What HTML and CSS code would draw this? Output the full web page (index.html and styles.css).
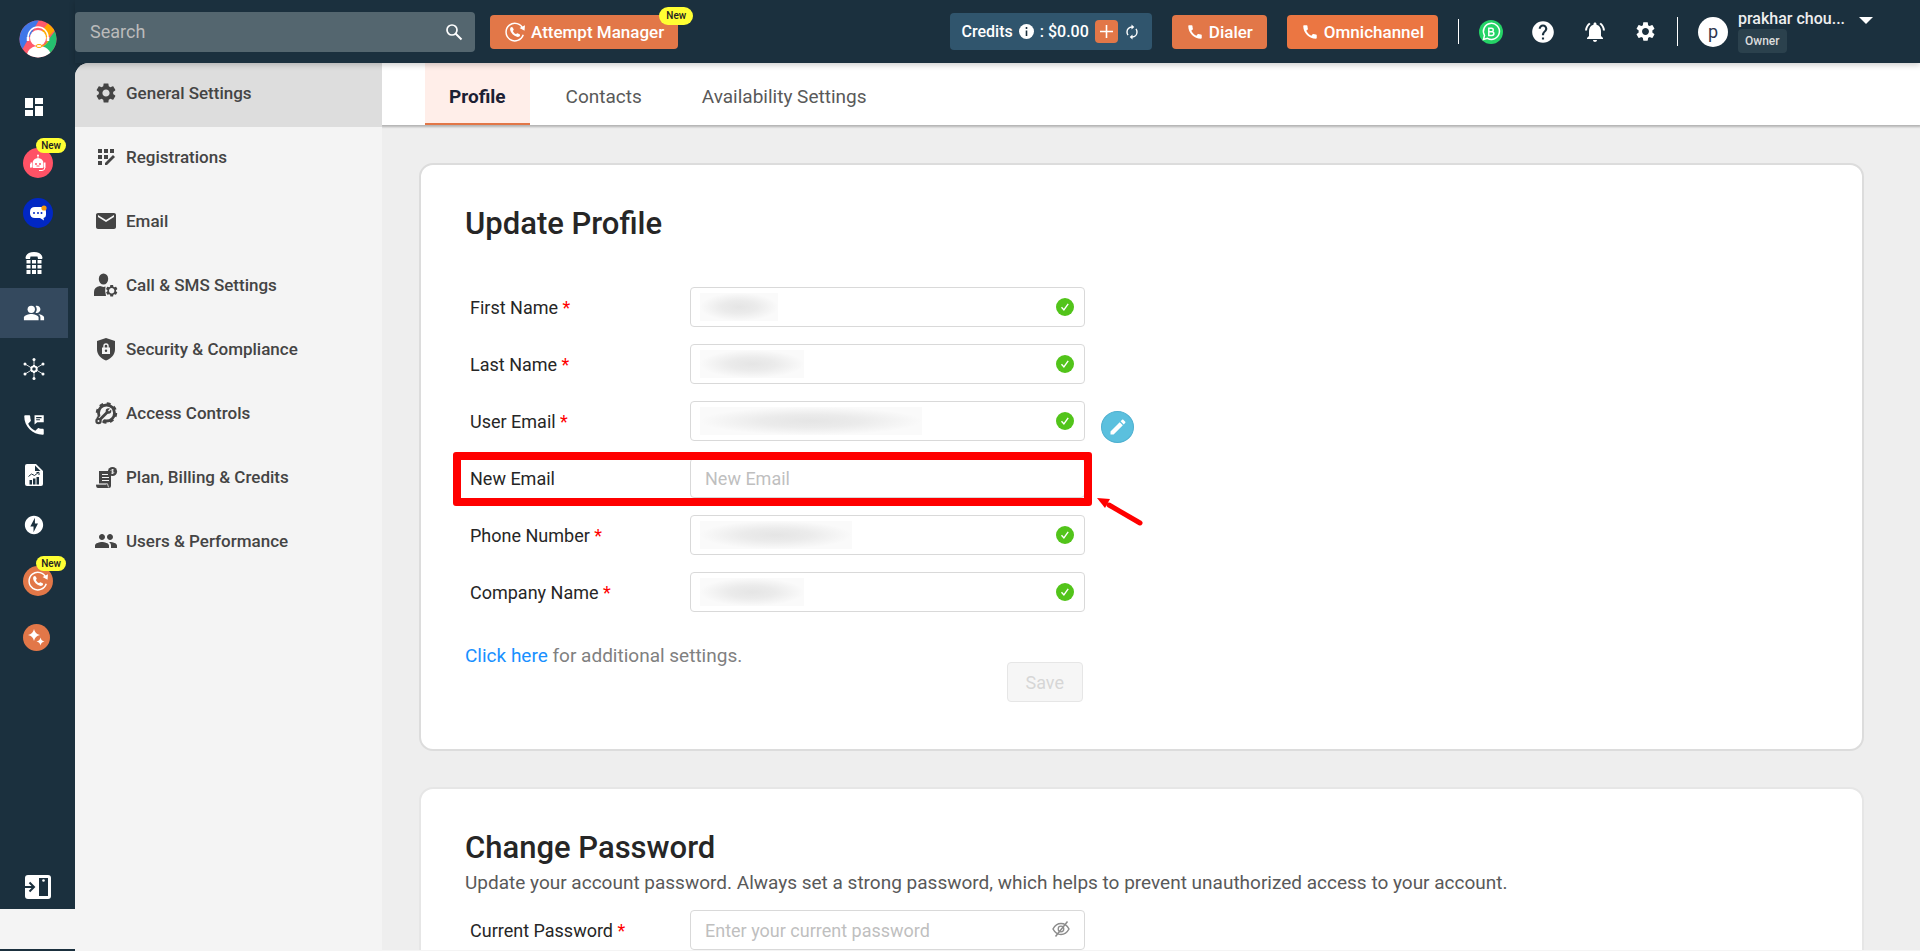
FILE: index.html
```html
<!DOCTYPE html>
<html lang="en">
<head>
  <meta charset="UTF-8" />
  <meta name="viewport" content="width=device-width, initial-scale=1.0"/>
  <title>General Settings | Profile</title>
  <link rel="stylesheet" href="styles.css">
</head>
<body>
  <!-- shared icons -->
  <svg class="sprite" aria-hidden="true">
    <symbol id="gear" viewBox="0 0 24 24"><path d="M19.14 12.94c.04-.3.06-.61.06-.94 0-.32-.02-.64-.07-.94l2.03-1.58c.18-.14.23-.41.12-.61l-1.92-3.32c-.12-.22-.37-.29-.59-.22l-2.39.96c-.5-.38-1.03-.7-1.62-.94l-.36-2.54c-.04-.24-.24-.41-.48-.41h-3.84c-.24 0-.43.17-.47.41l-.36 2.54c-.59.24-1.13.57-1.62.94l-2.39-.96c-.22-.08-.47 0-.59.22L2.74 8.87c-.12.21-.08.47.12.61l2.03 1.58c-.05.3-.09.63-.09.94s.02.64.07.94l-2.03 1.58c-.18.14-.23.41-.12.61l1.92 3.32c.12.22.37.29.59.22l2.39-.96c.5.38 1.03.7 1.62.94l.36 2.54c.05.24.24.41.48.41h3.84c.24 0 .44-.17.47-.41l.36-2.54c.59-.24 1.13-.56 1.62-.94l2.39.96c.22.08.47 0 .59-.22l1.92-3.32c.12-.22.07-.47-.12-.61l-2.01-1.58zM12 15.6c-1.98 0-3.6-1.62-3.6-3.6s1.62-3.6 3.6-3.6 3.6 1.62 3.6 3.6-1.62 3.6-3.6 3.6z"/></symbol>
    <symbol id="phone" viewBox="0 0 24 24"><path d="M20.01 15.38c-1.23 0-2.42-.2-3.53-.56-.35-.12-.74-.03-1.01.24l-1.57 1.97c-2.83-1.35-5.48-3.9-6.89-6.83l1.95-1.66c.27-.28.35-.67.24-1.02-.37-1.11-.56-2.3-.56-3.53 0-.54-.45-.99-.99-.99H4.19C3.65 3 3 3.24 3 3.99 3 13.28 10.73 21 20.01 21c.71 0 .99-.63.99-1.18v-3.45c0-.54-.45-.99-.99-.99z"/></symbol>
    <symbol id="check" viewBox="0 0 18 18"><circle cx="9" cy="9" r="9" fill="#52c41a"/><path d="M5.5 9.3l2.4 2.6 4.3-6" fill="none" stroke="#fff" stroke-width="1.4"/></symbol>
    <symbol id="redial" viewBox="0 0 24 24"><path d="M20.8 8.6A9.6 9.6 0 1 0 21 15" fill="none" stroke="#fff" stroke-width="1.6"/><path d="M17 7.6l5.4 2.9.5-6z"/><path d="M7.2 7.2c.9-.9 1.7-1 2.3-.1l1 1.8c.3.7-.2 1.2-.8 1.9.7 1.6 1.9 2.8 3.5 3.5.8-.7 1.3-1.2 2-.8l1.8 1c.9.7.7 1.5-.2 2.3-1.300.9-3.200.600-5.200-.6-1.700-1.100-3-2.500-4-4.200-1-1.800-1.300-3.600-.4-4.800z"/></symbol>
  </svg>

  <div class="app">
    <nav class="rail" aria-label="Main">
      <a href="#" class="logo" aria-label="Home">
        <svg width="38" height="38" viewBox="0 0 38 38">
          <defs><clipPath id="round"><circle cx="19" cy="19" r="18.500"/></clipPath></defs>
          <g clip-path="url(#round)">
            <path fill="#ff5a6b" d="M0 0h38v38H0z"/>
            <path fill="#3f77e8" d="M0 0h20L3 30 0 32z"/>
            <path fill="#ffa800" d="M29 3l7 7-18 18-2-8z"/>
            <path fill="#25c16f" d="M36 11l2 0v22l-10 2-4-8z"/>
            <path fill="#fff" d="M8 36c0-7 6-10 12-10s12 4 12 10v4H8z"/>
            <circle cx="19" cy="18" r="8" fill="#fff"/>
            <path d="M9 20v-3a10 10 0 0 1 20 0v3" fill="none" stroke="#fff" stroke-width="1.500"/>
            <path d="M9 17v4M29 17v4" stroke="#fff" stroke-width="2.500"/>
            <path d="M29 21q-2 5-8 5" fill="none" stroke="#ffa800" stroke-width="1"/>
            <ellipse cx="20" cy="26" rx="3" ry="1.500" fill="#fff" stroke="#ffa800"/>
          </g>
        </svg>
      </a>
      <a href="#" class="rail-item" aria-label="Dashboard">
        <svg width="24" height="24" viewBox="0 0 24 24"><path d="M3 13h8V3H3v10zm0 8h8v-6H3v6zm10 0h8V11h-8v10zm0-18v6h8V3h-8z"/></svg>
      </a>
      <a href="#" class="rail-item spaced" aria-label="Voice bot">
        <span class="bubble pink">
          <svg width="18" height="18" viewBox="0 0 18 18"><path d="M8.600 1h.8v3h-.8z"/><circle cx="9" cy="1.500" r="1"/><path d="M3.500 13V9.500a5.500 5.500 0 0 1 11 0V13q0 1-1 1h-9q-1 0-1-1z"/><path d="M1.500 8.500h1.500v5H1.500zM15 8.500h1.500v5H15z"/><path d="M1.500 13.500V10M16 13q0 3.500-3 3.500h-3" fill="none" stroke="#fff"/><circle cx="7" cy="10" r="1" fill="#ff5266"/><circle cx="11" cy="10" r="1" fill="#ff5266"/><path d="M7.500 12h3" stroke="#ff5266"/></svg>
        </span>
        <span class="new-tag">New</span>
      </a>
      <a href="#" class="rail-item" aria-label="Chat">
        <span class="bubble blue">
          <svg width="18" height="18" viewBox="0 0 18 18"><path d="M6 3h6q5 0 5 5v3q0 2.500-2.500 3l.5 2.500-4-2.500H6q-5 0-5-5V8q0-5 5-5z"/><g fill="#0127c4"><circle cx="5" cy="9" r="1"/><circle cx="9" cy="9" r="1"/><circle cx="12.500" cy="9" r="1"/></g><circle cx="15" cy="4" r="2.600" fill="#f99b0b"/></svg>
        </span>
      </a>
      <a href="#" class="rail-item" aria-label="Dial pad">
        <svg width="18" height="24" viewBox="0 0 18 24"><path d="M.5 7C1 3 4 1 9 1s8 2 8.500 6l-.5 1h-4l-.5-2.500h-7L5 8H1z"/><path d="M1.500 9h4v3.500h-4zM7 9h4v3.500H7zM12.500 9h4v3.500h-4zM1.500 14h4v3.500h-4zM7 14h4v3.500H7zM12.500 14h4v3.500h-4zM1.500 19h4v4h-4zM7 19h4v4H7zM12.500 19h4v4h-4z"/></svg>
      </a>
      <a href="#" class="rail-item active" aria-label="Users">
        <svg width="22" height="22" viewBox="0 0 24 24"><path d="M16.670 13.130C18.040 14.060 19 15.320 19 17v3h4v-3c0-2.180-3.570-3.470-6.330-3.870z"/><circle cx="9" cy="8" r="4"/><path d="M15 12c2.210 0 4-1.790 4-4s-1.790-4-4-4c-.47 0-.91.1-1.330.24C14.500 5.270 15 6.580 15 8s-.5 2.730-1.330 3.760c.42.140.860.240 1.330.240z"/><path d="M9 13c-2.670 0-8 1.340-8 4v3h16v-3c0-2.660-5.330-4-8-4z"/></svg>
      </a>
      <a href="#" class="rail-item spaced" aria-label="Integrations">
        <svg width="22" height="22" viewBox="0 0 22 22"><path d="M11 1v6M11 15v6M2 6l5 3M20 6l-5 3M2 16l5-3M20 16l-5-3" stroke="#fff" stroke-width=".8"/><circle cx="11" cy="11" r="2.700" fill="none" stroke="#fff" stroke-width="1.800"/><path d="M11 7v8M7.500 9l7 4M14.500 9l-7 4" stroke="#fff" stroke-width="2" stroke-dasharray="1.200 5.600"/><circle cx="11" cy="1.500" r="1.500"/><circle cx="11" cy="20.500" r="1.500"/><circle cx="2" cy="6" r="1.500"/><circle cx="20" cy="6" r="1.500"/><circle cx="2" cy="16" r="1.500"/><circle cx="20" cy="16" r="1.500"/></svg>
      </a>
      <a href="#" class="rail-item spaced" aria-label="Call logs">
        <svg width="26" height="26" viewBox="0 0 24 24"><path d="M20 15.500c-1.250 0-2.450-.2-3.570-.57-.35-.11-.74-.03-1.020.24l-2.200 2.200c-2.830-1.440-5.150-3.750-6.590-6.590l2.200-2.210c.28-.26.36-.65.25-1C8.700 6.450 8.500 5.250 8.500 4c0-.55-.45-1-1-1H4c-.55 0-1 .45-1 1 0 9.390 7.610 17 17 17 .55 0 1-.45 1-1v-3.500c0-.55-.45-1-1-1z"/><path d="M12.500 3v8.500L15 9.500h6V3z"/><path d="M14 5.200h5M14 7.200h3.500" stroke="#1b303e"/></svg>
      </a>
      <a href="#" class="rail-item" aria-label="Reports">
        <svg width="18" height="22" viewBox="0 0 18 22"><path d="M2 0h9l7 7v13q0 2-2 2H2q-2 0-2-2V2q0-2 2-2z"/><g fill="#1b303e"><path d="M10 1.500V7h5.500z"/><path d="M4.500 16H7v4.500H4.500zM8 14.500h2.500v6H8zM11.500 13H14v7.500h-2.500z"/></g><path d="M3.500 12.500l3-2.500 3 1.500 4.500-3.500M11.500 8.500H14V11" fill="none" stroke="#1b303e"/></svg>
      </a>
      <a href="#" class="rail-item" aria-label="Automation">
        <svg width="22" height="22" viewBox="0 0 24 24"><path d="M12 2.020c-5.510 0-9.980 4.470-9.980 9.980s4.470 9.980 9.980 9.980 9.980-4.470 9.980-9.980S17.510 2.020 12 2.020zM11.480 20v-6.260H8L13 4v6.260h3.350L11.480 20z"/></svg>
      </a>
      <a href="#" class="rail-item spaced" aria-label="Attempt Manager">
        <span class="bubble orange"><svg width="22" height="22"><use href="#redial"/></svg></span>
        <span class="new-tag">New</span>
      </a>
      <a href="#" class="rail-item spaced" aria-label="AI tools">
        <span class="bubble orange small">
          <svg width="17" height="17" viewBox="0 0 17 17"><path d="M6 0q1 5 6 6-5 1-6 6-1-5-6-6 5-1 6-6z"/><path d="M12.500 8.500q.7 3.300 4 4-3.300.7-4 4-.7-3.300-4-4 3.300-.7 4-4z"/></svg>
        </span>
      </a>
      <button type="button" class="rail-toggle" aria-label="Expand menu">
        <svg width="26" height="24" viewBox="0 0 26 24"><rect width="26" height="24" rx="3"/><path d="M14 3h9v18h-9z" fill="#1b303e"/><circle cx="18.500" cy="5.500" r="1.300"/><path d="M0 12h8M4.500 7.500L9 12l-4.500 4.500" fill="none" stroke="#1b303e" stroke-width="2"/></svg>
      </button>
      <div class="rail-foot"></div>
    </nav>

    <div class="page">
      <header class="topbar">
        <form class="search">
          <input type="search" placeholder="Search" aria-label="Search">
          <button type="button" aria-label="Search"><svg width="18" height="18" viewBox="0 0 18 18"><circle cx="7" cy="7" r="5" fill="none" stroke="#fff" stroke-width="1.700"/><path d="M10.500 10.500l6 6" stroke="#fff" stroke-width="2"/></svg></button>
        </form>
        <button type="button" class="btn attempt"><svg width="22" height="22"><use href="#redial"/></svg>Attempt Manager<span class="new-tag big">New</span></button>

        <div class="credits">
          <span>Credits</span>
          <svg width="15" height="15" viewBox="0 0 15 15"><circle cx="7.500" cy="7.500" r="7.500"/><path d="M7.500 6.500V12M7.500 3v2" stroke="#1b303e" stroke-width="1.600"/></svg>
          <span>: $0.00</span>
          <button type="button" class="add" aria-label="Add credits"><svg width="23" height="23" viewBox="0 0 23 23"><path d="M5 11.500h13M11.500 5v13" stroke="#fff" stroke-width="1.600"/></svg></button>
          <button type="button" class="plain" aria-label="Refresh"><svg width="16" height="16" viewBox="0 0 16 16"><path d="M8 3C5 3 3 5.300 3 8c0 1.200.4 2.300 1 3.200M8 13c3 0 5-2.300 5-5 0-1.200-.4-2.300-1-3.200" fill="none" stroke="#fff" stroke-width="1.400"/><path d="M7.500.5v5L10.300 3zM8.500 15.500v-5L5.700 13z"/></svg></button>
        </div>
        <button type="button" class="btn"><svg width="18" height="18"><use href="#phone"/></svg>Dialer</button>
        <button type="button" class="btn bright"><svg width="18" height="18"><use href="#phone"/></svg>Omnichannel</button>

        <div class="tools">
          <a href="#" aria-label="WhatsApp Business"><svg width="24" height="24" viewBox="0 0 24 24"><circle cx="12" cy="12" r="12" fill="#25d366"/><path d="M4.500 19.500l1-4.200a8 8 0 1 1 3 3z" fill="none" stroke="#fff" stroke-width="1.500"/><path d="M9.800 8.300h2.800a1.600 1.600 0 0 1 0 3.400H9.800zm0 3.400h3.200a1.800 1.800 0 0 1 0 3.700H9.800z" fill="none" stroke="#fff" stroke-width="1.500"/></svg></a>
          <a href="#" aria-label="Help"><svg width="26" height="26" viewBox="0 0 24 24"><path d="M12 2C6.480 2 2 6.480 2 12s4.480 10 10 10 10-4.480 10-10S17.520 2 12 2zm1 17h-2v-2h2v2zm2.070-7.750l-.9.920C13.450 12.900 13 13.500 13 15h-2v-.5c0-1.100.45-2.100 1.170-2.830l1.240-1.260c.37-.36.59-.86.59-1.410 0-1.100-.9-2-2-2s-2 .9-2 2H8c0-2.210 1.790-4 4-4s4 1.790 4 4c0 .88-.36 1.680-.93 2.250z"/></svg></a>
          <a href="#" aria-label="Notifications"><svg width="24" height="24" viewBox="0 0 24 24"><path d="M7.580 4.080L6.150 2.650C3.750 4.480 2.170 7.300 2.030 10.500h2c.15-2.650 1.510-4.970 3.550-6.420zm12.390 6.420h2c-.15-3.200-1.730-6.020-4.120-7.850l-1.420 1.430c2.020 1.450 3.390 3.770 3.540 6.420zM18 11c0-3.070-1.640-5.640-4.500-6.320V4c0-.83-.67-1.500-1.500-1.500s-1.500.67-1.500 1.500v.68C7.630 5.360 6 7.920 6 11v5l-2 2v1h16v-1l-2-2v-5zm-6 11c1.100 0 2-.9 2-2h-4c0 1.100.9 2 2 2z"/></svg></a>
          <a href="#" aria-label="Settings"><svg width="23" height="23"><use href="#gear"/></svg></a>
        </div>
        <div class="account">
          <span class="avatar">p</span>
          <div class="who">
            <span class="name">prakhar chou...</span>
            <span class="role">Owner</span>
          </div>
          <button type="button" class="plain caret" aria-label="Account menu"><svg width="14" height="7" viewBox="0 0 14 7"><path d="M0 0h14L7 7z"/></svg></button>
        </div>
      </header>

      <div class="body">
        <aside class="menu">
          <a href="#" class="active"><svg width="24" height="24"><use href="#gear"/></svg>General Settings</a>
          <a href="#"><svg width="24" height="24" viewBox="0 0 24 24"><path d="M4 4h4v4H4zM10 4h4v4h-4zM16 4h4v4h-4zM4 10h4v4H4zM10 10h4v4h-4zM4 16h4v4H4z"/><path d="M11 20v-2l8-8 2 2-8 8z"/></svg>Registrations</a>
          <a href="#"><svg width="24" height="24" viewBox="0 0 24 24"><path d="M20 4H4c-1.100 0-1.990.9-1.990 2L2 18c0 1.100.9 2 2 2h16c1.100 0 2-.9 2-2V6c0-1.100-.9-2-2-2zm0 4l-8 5-8-5V6l8 5 8-5v2z"/></svg>Email</a>
          <a href="#"><svg width="24" height="24" viewBox="0 0 24 24"><ellipse cx="9.500" cy="6" rx="4.700" ry="5.500"/><path d="M0 23v-4q0-5 6-6l3.500 1 2-.5q-1 5 .5 9.500z"/><g transform="translate(10.500 10.500) scale(.6)"><path d="M19.140 12.940c.04-.3.060-.61.060-.94 0-.32-.02-.64-.07-.94l2.030-1.580c.18-.14.230-.41.120-.61l-1.920-3.320c-.12-.22-.37-.29-.59-.22l-2.390.96c-.5-.38-1.030-.7-1.620-.94l-.36-2.540c-.04-.24-.24-.41-.48-.41h-3.840c-.24 0-.43.170-.47.410l-.36 2.540c-.59.240-1.130.570-1.620.940l-2.390-.96c-.22-.08-.47 0-.59.220L2.740 8.870c-.12.210-.08.470.120.610l2.030 1.580c-.05.3-.09.630-.09.940s.02.640.070.940l-2.030 1.580c-.18.140-.23.410-.12.610l1.920 3.320c.12.220.370.290.590.220l2.390-.96c.5.380 1.030.7 1.620.940l.36 2.540c.05.240.240.410.480.410h3.840c.24 0 .44-.17.470-.41l.36-2.540c.59-.24 1.130-.56 1.620-.94l2.390.96c.22.080.470 0 .59-.22l1.920-3.320c.12-.22.070-.47-.12-.61l-2.010-1.580zM12 16.500c-2.500 0-4.500-2-4.500-4.500s2-4.500 4.500-4.500 4.500 2 4.500 4.500-2 4.500-4.500 4.500z"/></g></svg>Call &amp; SMS Settings</a>
          <a href="#"><svg width="24" height="24" viewBox="0 0 24 24"><path d="M12 1L3 4v8c0 6 4 9.500 9 11.500 5-2 9-5.500 9-11.500V4z"/><path d="M8 10.500h8v6.500H8z" fill="#f4f4f4"/><path d="M10 11V9a2 2 0 0 1 4 0v2" fill="none" stroke="#f4f4f4" stroke-width="1.400"/><circle cx="12" cy="13.700" r="1.200"/></svg>Security &amp; Compliance</a>
          <a href="#"><svg width="24" height="24" viewBox="0 0 24 24"><circle cx="12.500" cy="12" r="8" fill="none" stroke="#444" stroke-width="2.800"/><circle cx="12.500" cy="12" r="9.600" fill="none" stroke="#444" stroke-width="2.200" stroke-dasharray="3.800 3.740"/><path d="M5 20l6-6.500" stroke="#f4f4f4" stroke-width="5"/><path d="M5 19.500L15 9.500" stroke="#444" stroke-width="2.800"/><circle cx="14.500" cy="10" r="2.800"/><path d="M14.500 10l2.500-2.500" stroke="#f4f4f4" stroke-width="1.400"/><circle cx="4.500" cy="20" r="3.200"/><circle cx="4.500" cy="20" r="1" fill="#f4f4f4"/></svg>Access Controls</a>
          <a href="#"><svg width="24" height="24" viewBox="0 0 24 24"><path d="M5 6h11l1 4v11q0 2-2 2h-2l-1-4H5z"/><path d="M2 19.500h12v3.500H4q-2 0-2-3.500z"/><circle cx="18.500" cy="6.500" r="4.600"/><path d="M8 9.500h6M8 12.500h7M8 15.500h7" stroke="#f4f4f4"/><path d="M2 18.800h11.500l1 3.500" fill="none" stroke="#f4f4f4" stroke-width=".8"/><path d="M20 5q-3-1-3 .4c0 1.300 3 .8 3 2.200q-.5 1.200-3 .4M18.500 4v5" fill="none" stroke="#f4f4f4" stroke-width=".8"/></svg>Plan, Billing &amp; Credits</a>
          <a href="#"><svg width="24" height="24" viewBox="0 0 24 24"><path d="M16 11c1.660 0 2.990-1.340 2.990-3S17.660 5 16 5c-1.660 0-3 1.340-3 3s1.340 3 3 3zm-8 0c1.660 0 2.990-1.340 2.990-3S9.660 5 8 5C6.340 5 5 6.340 5 8s1.340 3 3 3zm0 2c-2.330 0-7 1.170-7 3.500V19h14v-2.500c0-2.330-4.670-3.500-7-3.500zm8 0c-.29 0-.62.02-.97.05 1.160.84 1.970 1.970 1.970 3.450V19h6v-2.500c0-2.330-4.670-3.500-7-3.500z"/></svg>Users &amp; Performance</a>
        </aside>

        <main class="main">
          <nav class="tabs" aria-label="Settings tabs">
            <a href="#" class="active">Profile</a>
            <a href="#">Contacts</a>
            <a href="#">Availability Settings</a>
          </nav>

          <div class="cards">
            <section class="card">
              <h1>Update Profile</h1>
              <form class="form">
                <div class="row">
                  <label for="firstName">First Name <b>*</b></label>
                  <div class="field"><input type="text" id="firstName"><span class="masked mask-sm"></span><svg class="ok" width="18" height="18"><use href="#check"/></svg></div>
                </div>
                <div class="row">
                  <label for="lastName">Last Name <b>*</b></label>
                  <div class="field"><input type="text" id="lastName"><span class="masked mask-md"></span><svg class="ok" width="18" height="18"><use href="#check"/></svg></div>
                </div>
                <div class="row">
                  <label for="userEmail">User Email <b>*</b></label>
                  <div class="field"><input type="email" id="userEmail"><span class="masked mask-xl"></span><svg class="ok" width="18" height="18"><use href="#check"/></svg></div>
                  <button type="button" class="edit" aria-label="Edit email"><svg width="20" height="20" viewBox="0 0 24 24"><path d="M3 17.250V21h3.750L17.810 9.940l-3.750-3.750L3 17.250zM20.710 7.040c.39-.39.39-1.020 0-1.410l-2.340-2.340c-.39-.39-1.020-.39-1.410 0l-1.830 1.830 3.750 3.750 1.830-1.830z"/></svg></button>
                </div>
                <div class="row highlight">
                  <label for="newEmail">New Email</label>
                  <div class="field"><input type="email" id="newEmail" placeholder="New Email"></div>
                  <svg class="arrow" width="48" height="30" viewBox="0 0 48 30"><path d="M12 8l31 18" stroke="#f00" stroke-width="5" stroke-linecap="round"/><path d="M0 1l13 1-5 9z" fill="#f00"/></svg>
                </div>
                <div class="row">
                  <label for="phone-number">Phone Number <b>*</b></label>
                  <div class="field"><input type="tel" id="phone-number"><span class="masked mask-lg"></span><svg class="ok" width="18" height="18"><use href="#check"/></svg></div>
                </div>
                <div class="row">
                  <label for="company">Company Name <b>*</b></label>
                  <div class="field"><input type="text" id="company"><span class="masked mask-md"></span><svg class="ok" width="18" height="18"><use href="#check"/></svg></div>
                </div>
                <div class="form-foot">
                  <p><a href="#">Click here</a> for additional settings.</p>
                  <button type="submit" class="save" disabled>Save</button>
                </div>
              </form>
            </section>

            <section class="card soft">
              <h1>Change Password</h1>
              <p class="hint">Update your account password. Always set a strong password, which helps to prevent unauthorized access to your account.</p>
              <form class="form">
                <div class="row">
                  <label for="currentPassword">Current Password <b>*</b></label>
                  <div class="field"><input type="password" id="currentPassword" placeholder="Enter your current password"><button type="button" class="plain eye" aria-label="Show password"><svg width="18" height="16" viewBox="0 0 18 16"><path d="M1 8q3-5.500 8-5.500T17 8q-3 5.500-8 5.500T1 8zM15.500.5l-12 15" fill="none" stroke="#8c8c8c" stroke-width="1.500"/><circle cx="9" cy="8" r="2.800" fill="none" stroke="#8c8c8c" stroke-width="1.300"/></svg></button></div>
                </div>
              </form>
            </section>
          </div>
        </main>
      </div>
    </div>
  </div>
</body>
</html>
```
FILE: styles.css
```css
* {
  box-sizing: border-box;
}

body {
  margin: 0;
  font-family: Roboto, "Liberation Sans", sans-serif;
  font-size: 18px;
  color: #262626;
  background-color: #eee;
  overflow: hidden;
}

a {
  text-decoration: none;
}

button,
input {
  font-family: inherit;
}

button {
  cursor: pointer;
}

svg {
  display: block;
  flex: none;
  fill: currentColor;
}

.sprite {
  position: absolute;
  width: 0;
  height: 0;
}

.app {
  display: flex;
  height: 100vh;
}

/* left icon rail */
.rail {
  flex: 0 0 75px;
  display: flex;
  flex-direction: column;
  padding-bottom: 2px;
  background-color: #1b303e;
  color: #fff;
}

.logo {
  align-self: center;
  padding: 20px 0 24px;
}

.rail-item {
  position: relative;
  display: flex;
  align-items: center;
  justify-content: center;
  flex: 0 0 50px;
  width: 68px;
  color: #fff;
}

.rail-item.spaced {
  margin-top: 6px;
}

.rail-item.active {
  background-color: #34495e;
}

.bubble {
  display: flex;
  align-items: center;
  justify-content: center;
  width: 30px;
  height: 30px;
  margin-left: 8px;
  border-radius: 50%;
}

.bubble.small {
  width: 27px;
  height: 27px;
  margin-left: 4px;
}

.pink {
  background-color: #ff5266;
}

.blue {
  background-color: #0127c4;
}

.orange {
  background-color: #e27748;
}

.new-tag {
  position: absolute;
  top: 0;
  right: 2px;
  padding: 0 5px;
  border-radius: 8px;
  background-color: #ffff33;
  color: #222;
  font-size: 10px;
  font-weight: 500;
  line-height: 15px;
}

.new-tag.big {
  top: -8px;
  right: -15px;
  padding: 0 7px;
  border-radius: 9px;
  line-height: 18px;
}

.rail-toggle {
  display: flex;
  align-self: center;
  margin-top: auto;
  padding: 0 0 10px;
  border: none;
  background: none;
  color: #fff;
}

.rail-foot {
  flex: 0 0 40px;
  background-color: #f4f4f4;
}

/* header */
.page {
  flex: 1;
  min-width: 0;
  display: flex;
  flex-direction: column;
}

.topbar {
  position: relative;
  z-index: 2;
  flex: 0 0 63px;
  display: flex;
  align-items: center;
  padding-right: 47px;
  background-color: #1b303e;
  color: #fff;
  box-shadow: 0 2px 6px rgba(0, 0, 0, 0.2);
}

.search {
  display: flex;
  width: 400px;
  height: 40px;
  border-radius: 4px;
  background-color: #54666f;
}

.search input {
  flex: 1;
  min-width: 0;
  padding: 0 15px;
  border: none;
  background: none;
  color: #fff;
  font-size: 18px;
}

.search input::placeholder {
  color: #bbb;
}

.search button {
  padding: 0 12px;
  border: none;
  background: none;
}

.btn {
  position: relative;
  display: flex;
  align-items: center;
  gap: 5px;
  height: 34px;
  margin-right: 20px;
  padding: 0 14px;
  border: none;
  border-radius: 4px;
  background-color: #e27748;
  color: #fff;
  font-size: 17px;
  font-weight: 500;
}

.btn.bright {
  background-color: #eb7642;
}

.btn.attempt {
  margin: 0 auto 0 15px;
}

.credits {
  display: flex;
  align-items: center;
  gap: 6px;
  height: 37px;
  margin-right: 20px;
  padding: 0 12px;
  border-radius: 4px;
  background-color: #30556d;
  font-size: 16px;
  font-weight: 500;
}

.plain,
.add {
  display: flex;
  padding: 0;
  border: none;
  background: none;
  color: #fff;
}

.add {
  border-radius: 4px;
  background-color: #e27748;
}

.tools {
  display: flex;
  align-items: center;
  gap: 27px;
  height: 25px;
  padding: 0 20px;
  border-left: 1px solid #fff;
}

.tools a {
  color: #fff;
}

.account {
  display: flex;
  align-items: center;
  gap: 10px;
  height: 29px;
  padding-left: 20px;
  border-left: 1px solid #fff;
}

.avatar {
  width: 30px;
  height: 30px;
  border-radius: 50%;
  background-color: #fff;
  color: #30364f;
  line-height: 30px;
  text-align: center;
}

.who {
  display: flex;
  flex-direction: column;
  align-items: flex-start;
  width: 111px;
  padding-bottom: 2px;
}

.name {
  white-space: nowrap;
  font-size: 16px;
  font-weight: 500;
  line-height: 20px;
  color: #eee;
}

.role {
  padding: 0 7px;
  border-radius: 4px;
  background-color: #2b414d;
  color: #ddd;
  font-size: 12px;
  font-weight: 500;
  line-height: 24px;
}

.caret {
  align-self: flex-start;
}

/* settings menu */
.body {
  flex: 1;
  min-height: 0;
  display: flex;
  background-color: #1b303e;
}

.menu {
  position: relative;
  z-index: 1;
  flex: 0 0 307px;
  background-color: #f4f4f4;
  border-top-left-radius: 14px;
  overflow: hidden;
}

.menu a {
  display: flex;
  align-items: center;
  gap: 8px;
  height: 64px;
  padding: 0 19px 4px;
  color: #444;
  font-size: 17px;
  font-weight: 500;
}

.menu a.active {
  background-color: #ddd;
}

/* main column */
.main {
  flex: 1;
  min-width: 0;
  display: flex;
  flex-direction: column;
  background-color: #eee;
  border-bottom: 1px solid #f4f4f4;
}

.tabs {
  flex: none;
  display: flex;
  gap: 12px;
  height: 62px;
  padding-left: 43px;
  background-color: #fff;
  box-shadow: 0 1px 2px 1px rgba(0, 0, 0, 0.25);
}

.tabs a {
  padding: 4px 24px 0;
  border-bottom: 2px solid transparent;
  color: #595959;
  font-size: 19px;
  line-height: 60px;
}

.tabs a.active {
  border-color: #e27748;
  background-color: #ffeee9;
  color: #1c2033;
  font-weight: 700;
}

.cards {
  flex: 1;
  min-height: 0;
  overflow: hidden;
  padding: 38px 56px 0 37px;
}

.card {
  margin-bottom: 36px;
  padding: 39px 44px 47px;
  border: 2px solid #dcdcdc;
  border-radius: 14px;
  background-color: #fff;
}

.card.soft {
  border-color: #e6e6e6;
}

.card h1 {
  margin: 0;
  font-size: 31px;
  font-weight: 500;
  line-height: 40px;
}

.hint {
  margin: 3px 0 15px;
  color: #595959;
  font-size: 19px;
  line-height: 24px;
}

.form {
  display: flex;
  flex-direction: column;
  gap: 17px;
}

h1 + .form {
  margin-top: 43px;
}

.row {
  position: relative;
  display: flex;
  align-items: center;
  width: 620px;
  height: 40px;
  padding-left: 5px;
}

.row label {
  flex: 1;
}

.row b {
  color: #f00;
  font-weight: 400;
}

.field {
  position: relative;
  flex: 0 0 395px;
}

.field input {
  display: block;
  width: 100%;
  height: 40px;
  padding: 0 14px;
  border: 1px solid #d9d9d9;
  border-radius: 4px;
  background-color: #fff;
  font-size: 18px;
}

.field input::placeholder {
  color: #bfbfbf;
}

/* hidden personal values */
.masked {
  position: absolute;
  top: 6px;
  left: 10px;
  height: 28px;
  background: radial-gradient(closest-side, #e5e5e5, #ebebeb 45%, #fafafa);
}

.mask-sm {
  width: 78px;
}

.mask-md {
  width: 104px;
}

.mask-lg {
  width: 152px;
}

.mask-xl {
  width: 222px;
}

.ok,
.eye {
  position: absolute;
  top: 11px;
  right: 11px;
}

.eye {
  right: 15px;
}

.edit {
  position: absolute;
  top: 10px;
  left: 636px;
  display: flex;
  align-items: center;
  justify-content: center;
  width: 33px;
  height: 32px;
  padding: 0;
  border: 1px solid #4fb0d0;
  border-radius: 50%;
  background-color: #5bc0de;
  color: #fff;
}

.highlight::after {
  content: "";
  position: absolute;
  inset: -6px -7px -8px -12px;
  border: 8px solid #f00;
  border-radius: 3px;
  pointer-events: none;
}

.arrow {
  position: absolute;
  top: 39px;
  left: 632px;
}

.form-foot {
  display: flex;
  justify-content: space-between;
  width: 618px;
  margin-top: 15px;
}

.form-foot p {
  margin: 0;
  color: #808080;
  font-size: 19px;
  line-height: 24px;
}

.form-foot a {
  color: #1890ff;
}

.save {
  height: 40px;
  margin-top: 18px;
  padding: 0 18px;
  border: 1px solid #e6e6e6;
  border-radius: 4px;
  background-color: #f6f6f6;
  color: #d6d6d6;
  font-size: 18px;
}
```
